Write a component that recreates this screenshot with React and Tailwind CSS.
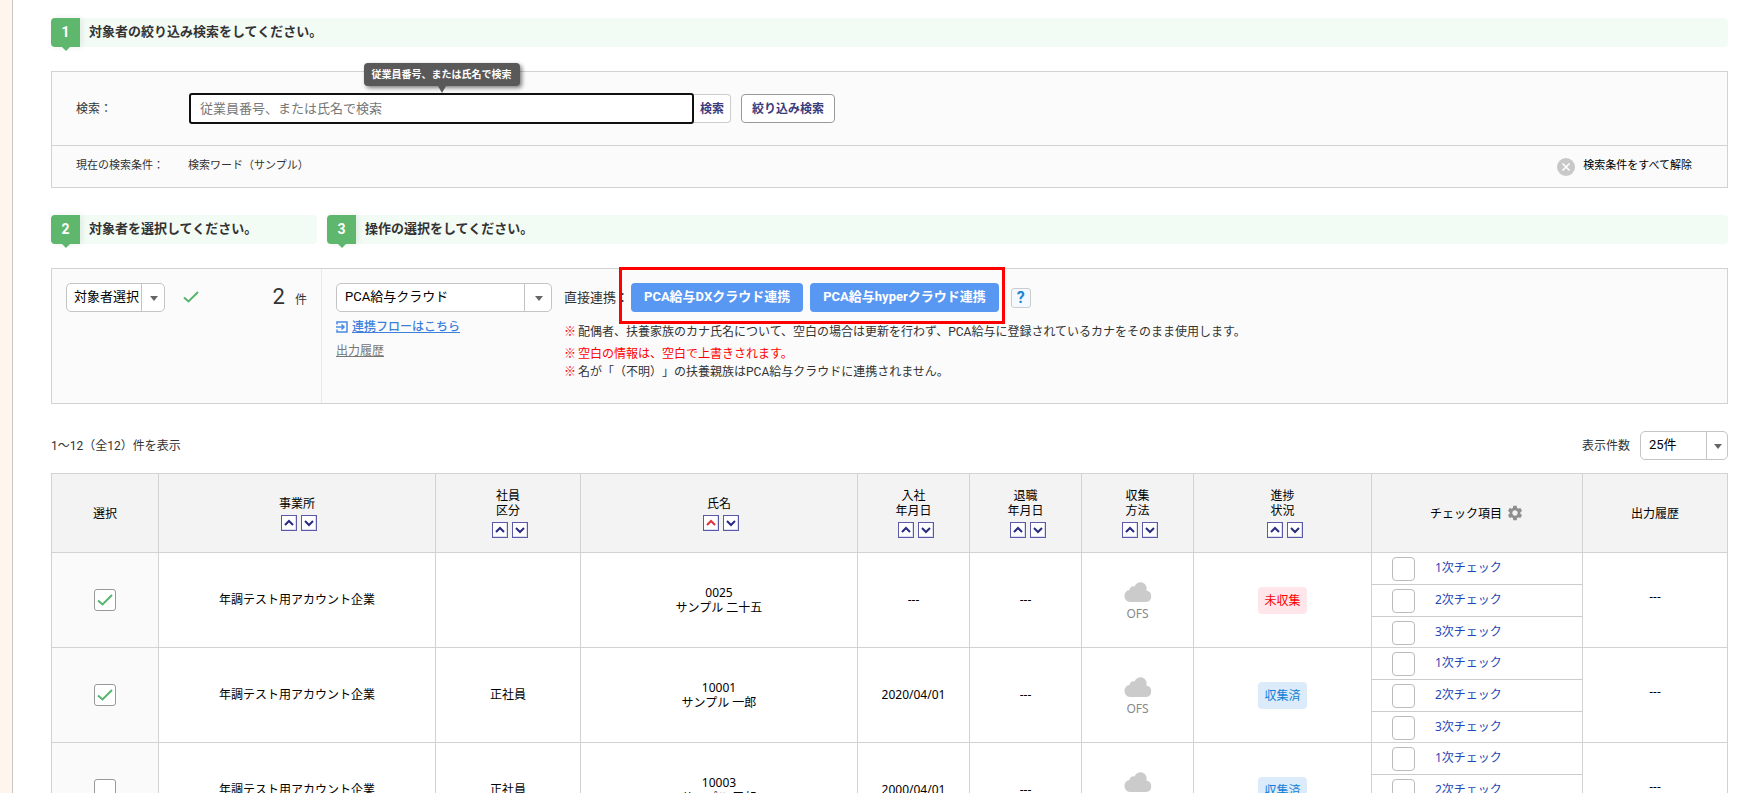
import { useState } from 'react';

const columns = [
    { label: ['選択'], width: 'w-[107px]' },
    { label: ['事業所'], width: 'w-[277px]', sortable: true },
    { label: ['社員', '区分'], width: 'w-[145px]', sortable: true },
    { label: ['氏名'], width: 'w-[277px]', sortable: true, active: 'asc' },
    { label: ['入社', '年月日'], width: 'w-[112px]', sortable: true },
    { label: ['退職', '年月日'], width: 'w-[112px]', sortable: true },
    { label: ['収集', '方法'], width: 'w-[112px]', sortable: true },
    { label: ['進捗', '状況'], width: 'w-[178px]', sortable: true },
    { label: ['チェック項目'], width: 'w-[211px]', gear: true },
    { label: ['出力履歴'], width: 'w-[145px]' },
];

const employees = [
    { code: '0025', name: 'サンプル 二十五', office: '年調テスト用アカウント企業', type: '', joined: '---', left: '---', done: false, selected: true },
    { code: '10001', name: 'サンプル 一郎', office: '年調テスト用アカウント企業', type: '正社員', joined: '2020/04/01', left: '---', done: true, selected: true },
    { code: '10003', name: 'サンプル 三郎', office: '年調テスト用アカウント企業', type: '正社員', joined: '2000/04/01', left: '---', done: true, selected: false },
];

const checks = ['1次チェック', '2次チェック', '3次チェック'];

function CheckMark({ className }) {
    return (
        <svg viewBox="0 0 16 12" className={className} fill="none" stroke="#56b56c" strokeWidth="2">
            <path d="M1 6.5 5.5 10.5 15 1" />
        </svg>
    );
}

function StepHeading({ number, children, className = '' }) {
    return (
        <div className={`flex h-[29px] rounded bg-[#f3fbf5] ${className}`}>
            <div className="relative flex w-[29px] items-center justify-center rounded-l bg-[#5fb66d] pb-0.5 text-sm font-bold text-white shadow-[2px_0_6px_rgba(0,0,0,0.08)]">
                {number}
                <span className="absolute top-full left-1/2 -ml-1 border-x-4 border-t-4 border-x-transparent border-t-[#5fb66d]" />
            </div>
            <h2 className="pl-[9px] text-[13px] leading-[27px] font-bold text-[#333]">{children}</h2>
        </div>
    );
}

function Dropdown({ label, options, className, selectClass, caretClass = 'w-6' }) {
    return (
        <div className={`relative h-[29px] ${className}`}>
            <select
                aria-label={label}
                className={`h-full w-full appearance-none rounded-[5px] border border-[#c4c4c4] bg-white pb-[2px] text-[13px] text-black outline-none ${selectClass}`}
            >
                {options.map((o) => (
                    <option key={o}>{o}</option>
                ))}
            </select>
            <span className={`pointer-events-none absolute inset-y-0 right-0 flex items-center justify-center border-l border-[#c4c4c4] ${caretClass}`}>
                <span className="mt-[2px] border-x-4 border-t-[5px] border-x-transparent border-t-[#666]" />
            </span>
        </div>
    );
}

function SortButton({ dir, active }) {
    return (
        <button
            type="button"
            aria-label={dir === 'asc' ? '昇順' : '降順'}
            className="ml-1 flex h-4 w-4 items-center justify-center border border-[#5a5aa8] bg-white shadow-[inset_-1px_-1px_0_#dcdcf0]"
        >
            <svg viewBox="0 0 10 8" className="h-2 w-2.5" fill="none" stroke={active ? '#e03038' : '#2a2a80'} strokeWidth="2">
                <path d={dir === 'asc' ? 'M1 6 5 2 9 6' : 'M1 2 5 6 9 2'} />
            </svg>
        </button>
    );
}

function Gear() {
    return (
        <svg viewBox="0 0 24 24" className="h-[18px] w-[18px]" fill="#8f8f8f">
            <path d="M19.14 12.94c.04-.3.06-.61.06-.94 0-.32-.02-.64-.07-.94l2.03-1.58c.18-.14.23-.41.12-.61l-1.92-3.32c-.12-.22-.37-.29-.59-.22l-2.39.96c-.5-.38-1.03-.7-1.62-.94l-.36-2.54c-.04-.24-.24-.41-.48-.41h-3.84c-.24 0-.43.17-.47.41l-.36 2.54c-.59.24-1.13.57-1.62.94l-2.39-.96c-.22-.08-.47 0-.59.22L2.74 8.87c-.12.21-.08.47.12.61l2.03 1.58c-.05.3-.09.63-.09.94s.02.64.07.94l-2.03 1.58c-.18.14-.23.41-.12.61l1.92 3.32c.12.22.37.29.59.22l2.39-.96c.5.38 1.03.7 1.62.94l.36 2.54c.05.24.24.41.48.41h3.84c.24 0 .44-.17.47-.41l.36-2.54c.59-.24 1.13-.56 1.62-.94l2.39.96c.22.08.47 0 .59-.22l1.92-3.32c.12-.22.07-.47-.12-.61l-2.01-1.58zM12 15.6c-1.98 0-3.6-1.62-3.6-3.6s1.62-3.6 3.6-3.6 3.6 1.62 3.6 3.6-1.62 3.6-3.6 3.6z" />
        </svg>
    );
}

function EmployeeRow({ row }) {
    const [selected, setSelected] = useState(row.selected);

    return (
        <tr className="text-center">
            <td className="border border-[#d2d2d2] bg-[#fafafa]">
                <label className="relative mx-auto flex h-[22px] w-[22px] items-center justify-center">
                    <input
                        type="checkbox"
                        aria-label={`${row.code} 選択`}
                        checked={selected}
                        onChange={(e) => setSelected(e.target.checked)}
                        className="h-[22px] w-[22px] appearance-none rounded-[3px] border border-[#999] bg-white"
                    />
                    {selected && <CheckMark className="pointer-events-none absolute h-3 w-4" />}
                </label>
            </td>
            <td className="border border-[#d2d2d2]">{row.office}</td>
            <td className="border border-[#d2d2d2]">{row.type}</td>
            <td className="border border-[#d2d2d2] leading-[15px]">
                {row.code}
                <br />
                {row.name}
            </td>
            <td className="border border-[#d2d2d2]">{row.joined}</td>
            <td className="border border-[#d2d2d2]">{row.left}</td>
            <td className="border border-[#d2d2d2] pt-1 text-[#888]">
                <svg viewBox="0 0 28 20" className="mx-auto mb-1 h-5 w-7" fill="#cbcbcb">
                    <path d="M6 20a5.700 5.700 0 0 1-5.500-6A5.500 5.500 0 0 1 5.500 8a3.800 3.800 0 0 1 5-3.500A6.200 6.200 0 0 1 22.300 8.500 5.800 5.800 0 0 1 22 20z" />
                </svg>
                OFS
            </td>
            <td className="border border-[#d2d2d2]">
                <span className={`inline-block rounded px-1.5 text-xs leading-[27px] ${row.done ? 'bg-[#dcebf9] text-[#0f7fd8]' : 'bg-[#fee6eb] text-[#ff0000]'}`}>
                    {row.done ? '収集済' : '未収集'}
                </span>
            </td>
            <td className="border border-[#d2d2d2] p-0">
                {checks.map((c, i) => (
                    <label key={c} className={`flex h-8 items-center pl-5 ${i < 2 ? 'border-b border-[#ccc]' : '-mb-0.5'}`}>
                        <input type="checkbox" className="h-6 w-[23px] appearance-none rounded border border-[#bbb] bg-white" />
                        <a href="#" className="ml-5 pb-0.5 text-[#2447b8]">{c}</a>
                    </label>
                ))}
            </td>
            <td className="border border-[#d2d2d2] pb-1.5">---</td>
        </tr>
    );
}

export default function App() {
    return (
        <div className="flex h-screen overflow-hidden bg-white font-['Roboto','Noto_Sans_CJK_JP',sans-serif] text-xs text-[#333] [text-spacing-trim:space-all]">
            <aside className="w-[13px] shrink-0 border-r border-[#c8c8c8] bg-[#fff5ec]" />

            <main className="min-w-0 flex-1 pt-[18px] pr-3.5 pl-[38px]">
                <StepHeading number="1">対象者の絞り込み検索をしてください。</StepHeading>

                {/* Search */}
                <section className="mt-6 border border-[#d2d2d2] bg-[#fbfbfb]">
                    <form className="flex h-[73px] items-center pl-6" onSubmit={(e) => e.preventDefault()}>
                        <label htmlFor="keyword" className="w-[113px]">検索：</label>
                        <div className="relative w-full max-w-[505px]">
                            <input
                                id="keyword"
                                type="text"
                                placeholder="従業員番号、または氏名で検索"
                                className="block h-[31px] w-full rounded-[3px] border-2 border-[#101010] bg-white px-[9px] text-[13px] outline-none placeholder:text-[#777]"
                            />
                            <div role="tooltip" className="absolute bottom-[38px] left-1/2 -translate-x-1/2 rounded-sm bg-[#595959] px-2 text-[10px] leading-[23px] font-bold whitespace-nowrap text-white shadow-[2px_2px_4px_rgba(0,0,0,0.5)]">
                                従業員番号、または氏名で検索
                                <span className="absolute top-full left-1/2 -ml-1 border-x-4 border-t-[7px] border-x-transparent border-t-[#595959]" />
                            </div>
                        </div>
                        <button type="submit" className="h-[29px] shrink-0 rounded-r border border-l-0 border-[#ccc] bg-white px-1.5 font-bold text-[#3c3c7c]">検索</button>
                        <button type="button" className="ml-2.5 h-[29px] shrink-0 rounded border border-[#999] bg-white px-2.5 font-bold text-[#3c3c7c]">絞り込み検索</button>
                    </form>
                    <div className="flex h-[42px] items-center border-t border-[#d2d2d2] pr-[35px] pl-6">
                        <span className="w-28 text-[11px]">現在の検索条件：</span>
                        <span className="text-[11px]">検索ワード（サンプル）</span>
                        <button type="button" className="ml-auto flex items-center gap-2 text-[11px] text-black">
                            <svg viewBox="0 0 18 18" className="h-[18px] w-[18px]">
                                <circle cx="9" cy="9" r="9" fill="#c8c8c8" />
                                <path d="m5.500 5.500 7 7m0-7-7 7" stroke="#fff" strokeWidth="1.600" />
                            </svg>
                            検索条件をすべて解除
                        </button>
                    </div>
                </section>

                <div className="mt-[27px] flex gap-2.5">
                    <StepHeading number="2" className="w-[266px]">対象者を選択してください。</StepHeading>
                    <StepHeading number="3" className="flex-1">操作の選択をしてください。</StepHeading>
                </div>

                {/* Target and operation */}
                <section className="mt-6 flex h-[136px] border border-[#d2d2d2] bg-[#fbfbfb]">
                    <div className="flex w-[270px] items-start border-r border-[#eaeaea] pt-3.5 pr-3.5 pl-3.5">
                        <Dropdown label="対象者選択" options={['対象者選択']} className="w-[99px]" selectClass="pl-[7px]" />
                        <CheckMark className="mt-2 ml-[18px] h-3 w-4" />
                        <p className="ml-auto flex items-baseline gap-2.5 leading-7">
                            <span className="text-[22px]">2</span>件
                        </p>
                    </div>
                    <div className="w-[242px] pt-3.5 pl-3.5">
                        <Dropdown label="連携先" options={['PCA給与クラウド']} className="w-[216px]" selectClass="pl-2" caretClass="w-7" />
                        <a href="#" className="mt-1.5 flex h-[18px] items-center gap-1 font-medium text-[#3c7fdc]">
                            <svg viewBox="0 0 12 12" className="h-3 w-3" fill="none" stroke="#4a8ae6" strokeWidth="1.500">
                                <path d="M1 3.500V1h10v10H1V8.500M0 6h8M5.500 3.500 8 6 5.500 8.500" />
                            </svg>
                            <span className="underline">連携フローはこちら</span>
                        </a>
                        <a href="#" className="mt-1.5 block leading-[18px] text-[#777] underline">出力履歴</a>
                    </div>
                    <div className="pt-3.5">
                        <div className="flex items-center">
                            <span className="w-[67px] text-[13px]">直接連携：</span>
                            <div className="relative flex gap-[7px]">
                                <button type="button" className="h-[29px] rounded bg-[#5897f2] px-[13px] pb-0.5 text-[13px] font-bold text-white">PCA給与DXクラウド連携</button>
                                <button type="button" className="h-[29px] rounded bg-[#5897f2] px-[13px] pb-0.5 text-[13px] font-bold text-white">PCA給与hyperクラウド連携</button>
                                <span className="pointer-events-none absolute -top-4 -right-1.5 -bottom-3 -left-3 border-[3px] border-[#ff0000]" />
                            </div>
                            <button type="button" aria-label="ヘルプ" className="ml-3 h-5 w-5 rounded-[3px] border border-[#ccc] bg-[#f3f9ff] text-base leading-[18px] font-bold text-[#1f86cf]">?</button>
                        </div>
                        <ul className="mt-[11px] leading-[18px]">
                            <li className="mb-1 flex gap-0.5"><span className="font-bold text-[#ff0000]">※</span>配偶者、扶養家族のカナ氏名について、空白の場合は更新を行わず、PCA給与に登録されているカナをそのまま使用します。</li>
                            <li className="flex gap-0.5 text-[#ff0000]"><span className="font-bold">※</span>空白の情報は、空白で上書きされます。</li>
                            <li className="flex gap-0.5"><span className="font-bold text-[#ff0000]">※</span>名が「（不明）」の扶養親族はPCA給与クラウドに連携されません。</li>
                        </ul>
                    </div>
                </section>

                <div className="mt-[27px] mb-[13px] flex items-center justify-between">
                    <p>1～12（全12）件を表示</p>
                    <div className="flex items-center gap-2.5">
                        <span>表示件数</span>
                        <Dropdown label="表示件数" options={['25件', '50件', '100件']} className="w-[88px]" selectClass="pl-2" caretClass="w-[22px]" />
                    </div>
                </div>

                <table className="w-full table-fixed border-collapse font-['Noto_Sans','Noto_Sans_CJK_JP',sans-serif] text-black">
                    <thead>
                        <tr className="h-[79px] bg-[#f3f3f3]">
                            {columns.map((col) => (
                                <th key={col.label.join('')} className={`border border-[#d2d2d2] p-0 leading-[15px] font-normal ${col.width}`}>
                                    <div className="flex items-center justify-center gap-1">
                                        <span>
                                            {col.label.map((line) => (
                                                <span key={line} className="block">{line}</span>
                                            ))}
                                        </span>
                                        {col.gear && <Gear />}
                                    </div>
                                    {col.sortable && (
                                        <div className="mt-1 flex justify-center">
                                            <SortButton dir="asc" active={col.active === 'asc'} />
                                            <SortButton dir="desc" active={col.active === 'desc'} />
                                        </div>
                                    )}
                                </th>
                            ))}
                        </tr>
                    </thead>
                    <tbody>
                        {employees.map((row) => (
                            <EmployeeRow key={row.code} row={row} />
                        ))}
                    </tbody>
                </table>
            </main>
        </div>
    );
}
